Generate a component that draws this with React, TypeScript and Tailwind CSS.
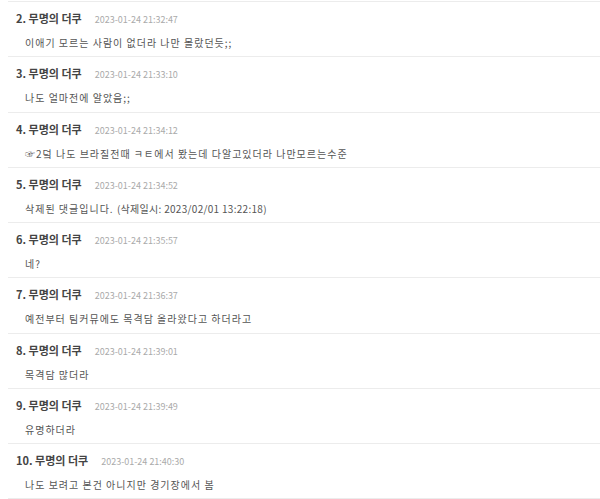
import React from "react";

const rows: { n: string; date: string; text: React.ReactNode }[] = [
  { n: "2.", date: "2023-01-24 21:32:47", text: "이애기 모르는 사람이 없더라 나만 몰랐던듯;;" },
  { n: "3.", date: "2023-01-24 21:33:10", text: "나도 얼마전에 알았음;;" },
  { n: "4.", date: "2023-01-24 21:34:12", text: "☞2덬 나도 브라질전때 ㅋㅌ에서 봤는데 다알고있더라 나만모르는수준" },
  {
    n: "5.",
    date: "2023-01-24 21:34:52",
    text: (
      <>
        삭제된 댓글입니다. <span className="tracking-[0.3px]">(삭제일시: 2023/02/01 13:22:18)</span>
      </>
    ),
  },
  { n: "6.", date: "2023-01-24 21:35:57", text: "네?" },
  { n: "7.", date: "2023-01-24 21:36:37", text: "예전부터 팀커뮤에도 목격담 올라왔다고 하더라고" },
  { n: "8.", date: "2023-01-24 21:39:01", text: "목격담 많더라" },
  { n: "9.", date: "2023-01-24 21:39:49", text: "유명하더라" },
  { n: "10.", date: "2023-01-24 21:40:30", text: "나도 보려고 본건 아니지만 경기장에서 봄" },
];

export default function App() {
  return (
    <div
      className="w-[600px] h-[499px] overflow-hidden bg-white pl-2"
      style={{ fontFamily: '"Noto Sans CJK KR", "Noto Sans", sans-serif' }}
    >
      <div className="pt-[1px]">
        {rows.map((r, i) => (
          <div key={i} className="h-[55.25px] border-t border-[#ececec] pl-2">
            <div className="flex items-baseline pt-[7px] h-[26px]">
              <span className="text-[11px] font-bold text-[#444] leading-[18px]">
                {r.n} 무명의 더쿠
              </span>
              <span className="ml-[13px] text-[9px] text-[#aaa] leading-[18px]">{r.date}</span>
            </div>
            <div className="pl-[9px] pt-[6px] text-[10px] tracking-[1px] text-[#555] leading-[18px]">
              {r.text}
            </div>
          </div>
        ))}
        <div className="border-t border-[#ececec]" />
      </div>
    </div>
  );
}
